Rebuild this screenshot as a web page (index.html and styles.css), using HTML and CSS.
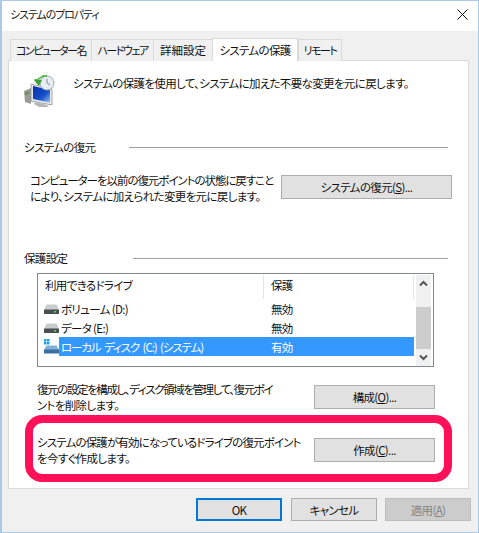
FILE: index.html
```html
<!DOCTYPE html>
<html lang="ja">
<head>
<meta charset="utf-8">
<title>システムのプロパティ</title>
<link rel="stylesheet" href="styles.css">
</head>
<body>
<div class="window">
  <header class="titlebar">
    <span class="title">システムのプロパティ</span>
    <svg class="close" width="11" height="11" viewBox="0 0 11 11"><path d="M.5.5l10 10M10.500.5l-10 10" stroke="#111" stroke-width="1" fill="none"/></svg>
  </header>
  <main class="client">
    <nav class="tabs">
      <span class="tab tab-a">コンピューター名</span>
      <span class="tab tab-b">ハードウェア</span>
      <span class="tab tab-c">詳細設定</span>
      <span class="tab tab-active">システムの保護</span>
      <span class="tab tab-e">リモート</span>
    </nav>
    <section class="panel">
      <div class="intro">
        <svg class="intro-icon" width="34" height="34" viewBox="0 0 34 34">
          <defs>
            <linearGradient id="scr" x1="0" y1="0" x2="1" y2="1"><stop offset="0" stop-color="#0a2fb0"/><stop offset=".6" stop-color="#1450c8"/><stop offset="1" stop-color="#9cc0ec"/></linearGradient>
          </defs>
          <path d="M1 17l7-3v16l-6-2z" fill="#9a9a96"/>
          <path d="M2 19l4-1.500v2l-4 1.500z" fill="#5f8f4e"/>
          <path d="M8 10l21 5v16L8 27z" fill="#e4e6ea" stroke="#8f959c" stroke-width=".8"/>
          <path d="M10 12l17 4v12.500L10 25z" fill="url(#scr)"/>
          <path d="M12 28l12 3 2 2-10 0-5-3z" fill="#b5b7b8"/>
          <circle cx="24" cy="9" r="7" fill="#e6ecf2" stroke="#a3aeb8"/>
          <path d="M24 5v4l3 2" stroke="#7a8894" fill="none"/>
          <path d="M14 10c1-5 6-8 10-7l0-2-4 0-6 4-3 0z" fill="#5cb84a"/>
          <path d="M11 6l5 6 3-6z" fill="#3f9e3a"/>
        </svg>
        <p class="intro-text">システムの保護を使用して、システムに加えた不要な変更を元に戻します。</p>
      </div>
      <h2 class="group-head head-restore"><span>システムの復元</span></h2>
      <div class="row row-restore">
        <p class="desc"><span class="tight-a">コンピューターを以前の復元ポイントの状態に戻すこと</span><br>により、システムに加えられた変更を元に戻します。</p>
        <button class="btn btn-wide">システムの復元(<u>S</u>)...</button>
      </div>
      <h2 class="group-head head-protect"><span>保護設定</span></h2>
      <div class="list">
        <div class="list-main">
          <div class="list-header">
            <span class="col-name">利用できるドライブ</span>
            <span class="col-state">保護</span>
          </div>
          <div class="list-row">
            <svg class="hdd" width="15" height="10" viewBox="0 0 15 10"><path d="M2.500.500h10L15 6H0z" fill="#c9cccc"/><rect y="5.500" width="15" height="4.500" rx=".5" fill="#4a4f52"/><rect x="10" y="7" width="2" height="1.500" fill="#5fdc4d"/></svg>
            <span class="col-name">ボリューム (D:)</span><span class="col-state">無効</span>
          </div>
          <div class="list-row">
            <svg class="hdd" width="15" height="10" viewBox="0 0 15 10"><path d="M2.500.500h10L15 6H0z" fill="#c9cccc"/><rect y="5.500" width="15" height="4.500" rx=".5" fill="#4a4f52"/><rect x="10" y="7" width="2" height="1.500" fill="#5fdc4d"/></svg>
            <span class="col-name">データ (E:)</span><span class="col-state">無効</span>
          </div>
          <div class="list-row row-selected">
            <svg class="hdd-sys" width="15" height="15" viewBox="0 0 15 15"><path d="M0 0h2.500v2.500H0zM3 0h2.500v2.500H3zM0 3h2.500v2.500H0zM3 3h2.500v2.500H3z" fill="#1ba1e2"/><path d="M2.500 6.500h10L15 11H0z" fill="#7fb2d8"/><rect y="10.500" width="15" height="4" rx=".5" fill="#3a6f9e"/></svg>
            <span class="sel-cells"><span class="col-name">ローカル ディスク (C:) (システム)</span><span class="col-state">有効</span></span>
          </div>
        </div>
        <div class="scrollbar">
          <svg width="15" height="17" viewBox="0 0 15 17"><path d="M4 10.500l3.500-3.500 3.500 3.500" stroke="#555" stroke-width="2" fill="none"/></svg>
          <div class="thumb"></div>
          <svg width="15" height="17" viewBox="0 0 15 17"><path d="M4 6.500l3.500 3.500 3.500-3.500" stroke="#555" stroke-width="2" fill="none"/></svg>
        </div>
      </div>
      <div class="row row-config">
        <p class="desc"><span class="tight-b">復元の設定を構成し、ディスク領域を管理して、復元ポイ</span><br>ントを削除します。</p>
        <button class="btn btn-mid">構成(<u>O</u>)...</button>
      </div>
      <div class="row row-create">
        <p class="desc"><span class="tight-c">システムの保護が有効になっているドライブの復元ポイント</span><br>を今すぐ作成します。</p>
        <button class="btn btn-mid">作成(<u>C</u>)...</button>
      </div>
    </section>
    <footer class="footer">
      <button class="btn btn-foot btn-default">OK</button>
      <button class="btn btn-foot">キャンセル</button>
      <button class="btn btn-foot btn-disabled">適用(<u>A</u>)</button>
    </footer>
  </main>
  <div class="highlight"></div>
</div>
</body>
</html>
```
FILE: styles.css
```css
* { box-sizing: border-box; }
html, body { margin: 0; padding: 0; }
body {
  width: 479px;
  height: 533px;
  overflow: hidden;
  background: #fff;
  font-family: "Noto Sans CJK JP", "Noto Sans", sans-serif;
  font-size: 11.5px;
  letter-spacing: -0.65px;
  font-feature-settings: "palt";
  color: #111;
}
.window {
  position: relative;
  width: 479px;
  height: 533px;
  border: 1px solid #a9cbe8;
  border-left-width: 2px;
  display: flex;
  flex-direction: column;
}
.titlebar {
  height: 30px;
  flex: none;
  background: #fff;
  display: flex;
  align-items: center;
  justify-content: space-between;
  padding: 0 10px 3px 8px;
}
.title { color: #222; line-height: 16px; font-size: 11px; letter-spacing: -1.1px; margin-bottom: 1px; }
.client {
  flex: 1;
  background: #f0f0f0;
  display: flex;
  flex-direction: column;
  padding-left: 6px;
}
.tabs {
  display: flex;
  align-items: flex-end;
  height: 30px;
  padding-left: 2px;
  position: relative;
  z-index: 1;
  margin-bottom: -1px;
}
.tab {
  height: 22px;
  border: 1px solid #d9d9d9;
  border-bottom: 0;
  margin-right: -1px;
  background: #f0f0f0;
  display: flex;
  align-items: center;
  justify-content: center;
  white-space: nowrap;
  line-height: 16px;
  padding-bottom: 1px;
}
.tab-a, .tab-b, .tab-e { font-size: 11px; letter-spacing: -1.5px; }
.tab-a { width: 82px; }
.tab-b { width: 63px; }
.tab-c { width: 60px; letter-spacing: 0; }
.tab-e { width: 44px; }
.tab-active {
  width: 86px;
  height: 23px;
  background: #fff;
  margin-right: 0;
  position: relative;
  z-index: 1;
}
.panel {
  width: 461px;
  height: 429px;
  background: #fff;
  border: 1px solid #d9d9d9;
  display: flex;
  flex-direction: column;
  padding: 0 0 0 15px;
}
.intro {
  display: flex;
  align-items: flex-start;
  height: 56px;
  padding-top: 12px;
}
.intro-icon { flex: none; margin-left: -1px; margin-top: 1px; }
.intro-text { margin: 0 0 0 16px; line-height: 20px; }
p { margin: 0; }
.group-head {
  margin: 0;
  font-weight: normal;
  font-size: inherit;
  display: flex;
  align-items: center;
  height: 18px;
  width: 424px;
  line-height: 18px;
}
.group-head span { flex: none; }
.group-head::after {
  content: "";
  flex: 1;
  height: 1px;
  background: #a0a0a0;
}
.head-restore { margin-top: 21px; }
.head-restore span { width: 105px; }
.head-protect { margin-top: 45px; }
.head-protect span { width: 109px; }
.row {
  display: flex;
  justify-content: space-between;
  align-items: center;
}
.desc { line-height: 16px; white-space: nowrap; min-width: 0; flex: 1; }
.tight-a { letter-spacing: -1.05px; }
.tight-b { letter-spacing: -1.4px; }
.tight-c { letter-spacing: -0.85px; }
.row-restore { margin-top: 16px; width: 428px; padding-left: 6px; height: 32px; }
.btn {
  font: inherit;
  font-feature-settings: inherit;
  letter-spacing: inherit;
  color: #111;
  background: #e1e1e1;
  border: 1px solid #adadad;
  height: 24px;
  padding: 0;
  line-height: 16px;
  flex: none;
}
.btn-wide { width: 171px; margin-top: -2px; }
.btn-mid { width: 121px; }
.list {
  display: flex;
  width: 397px;
  height: 94px;
  margin: 6px 0 0 13px;
  border: 1px solid #828790;
  padding: 0 2px 0 0;
  background: #fff;
}
.list-main { flex: 1; min-width: 0; display: flex; flex-direction: column; }
.list-header {
  display: flex;
  height: 25px;
  align-items: center;
  padding: 0 0 0 7px;
}
.list-header .col-name { width: 218px; line-height: 16px; margin-bottom: 4px; }
.col-name { flex: none; white-space: nowrap; }
.col-state { white-space: nowrap; }
.list-header .col-state {
  flex: 1;
  height: 24px;
  line-height: 20px;
  padding-left: 7px;
  border-left: 1px solid #e5e5e5;
  border-right: 1px solid #e5e5e5;
}
.list-row {
  height: 19px;
  display: flex;
  align-items: center;
  padding-left: 6px;
  line-height: 16px;
}
.hdd, .hdd-sys { flex: none; width: 15px; }
.list-row .col-name { width: 212px; padding-left: 2px; }
.row-selected .col-name { letter-spacing: -1.1px; word-spacing: 2px; }
.sel-cells {
  flex: 1;
  height: 19px;
  display: flex;
  align-items: center;
  background: #3399ff;
  color: #fff;
  outline: 1px dotted rgba(200, 120, 40, .7);
  outline-offset: -1px;
}
.scrollbar {
  width: 15px;
  flex: none;
  margin: 1px 0 0 2px;
  background: #f0f0f0;
  display: flex;
  flex-direction: column;
}
.thumb { height: 42px; margin-top: 15px; margin-bottom: auto; background: #cdcdcd; }
.row-config, .row-create { width: 398px; margin-left: 13px; height: 32px; }
.row-config { margin-top: 14px; }
.row-create { margin-top: 21px; }
.footer {
  display: flex;
  justify-content: flex-end;
  gap: 8px;
  padding: 9px 7px 0 0;
}
.btn-foot { width: 86px; height: 23px; }
.btn-default { border: 2px solid #0078d7; margin-right: 1px; }
.btn-disabled { background: #cccccc; border-color: #bfbfbf; color: #838383; }
.highlight {
  position: absolute;
  left: 23px;
  top: 414px;
  width: 427px;
  height: 67px;
  border: 8px solid #ff1059;
  border-radius: 17px;
  pointer-events: none;
}
```
